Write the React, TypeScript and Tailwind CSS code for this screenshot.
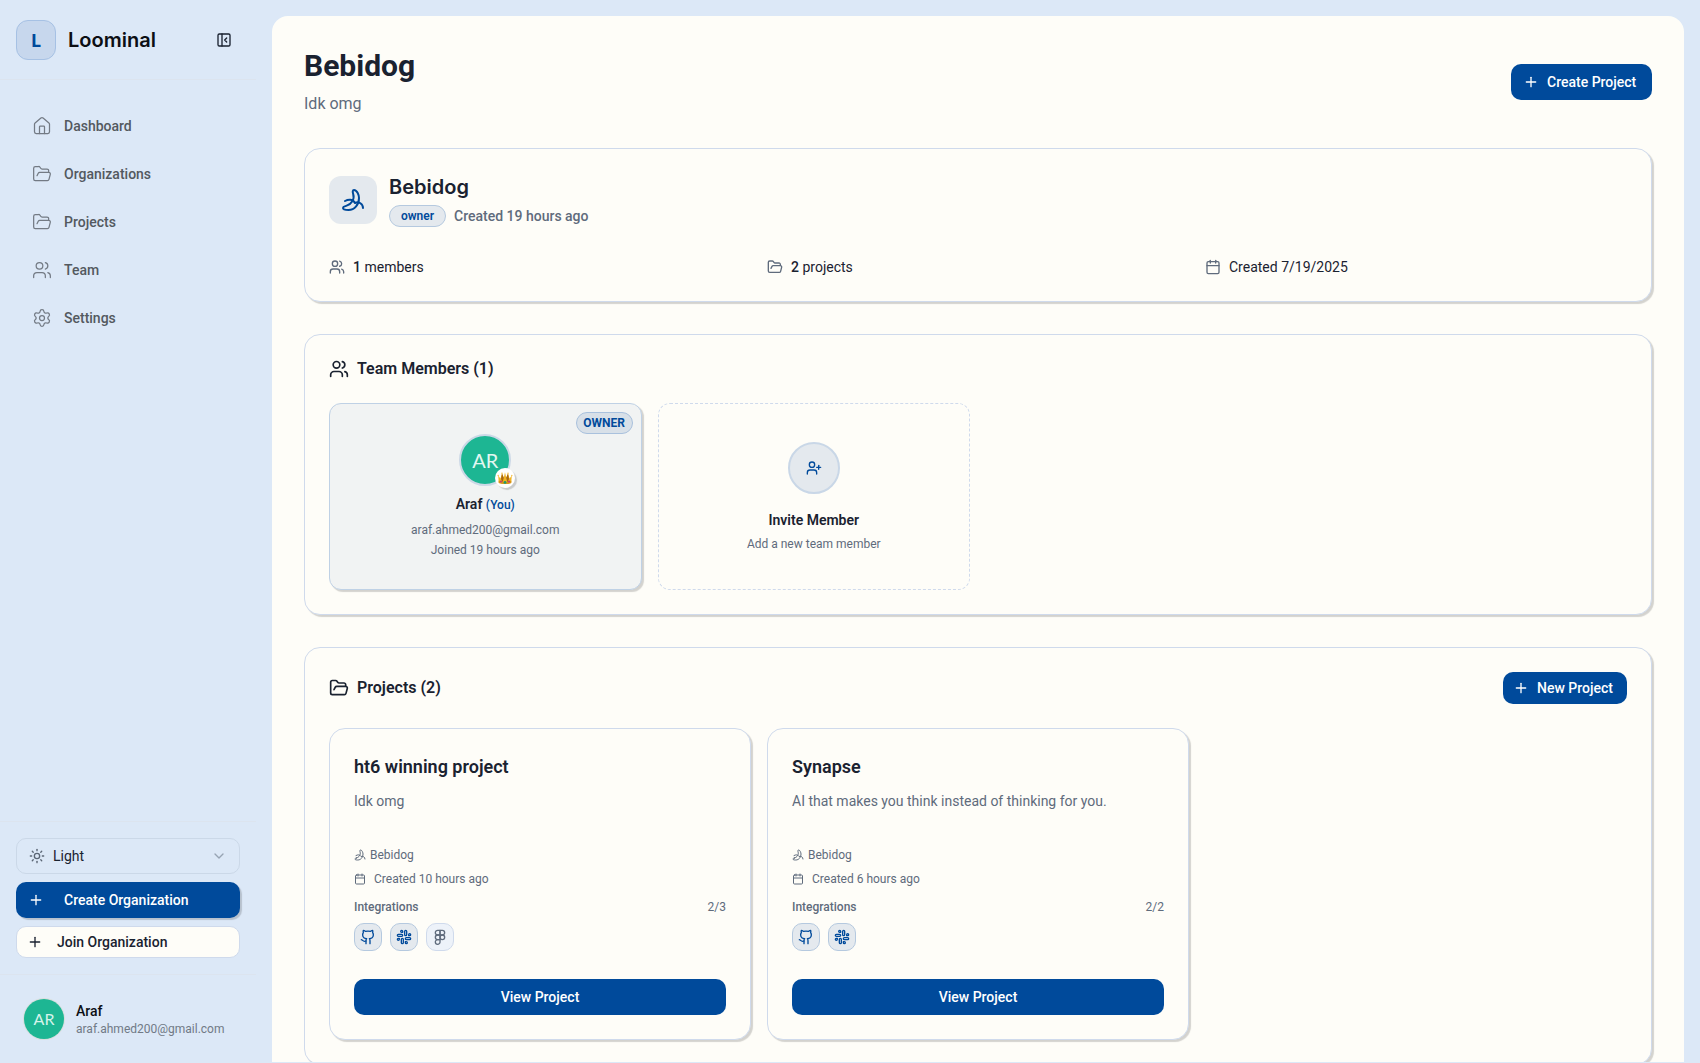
import {
  Banana,
  Calendar,
  ChevronDown,
  Figma,
  FolderOpen,
  Github,
  House,
  PanelLeftClose,
  Plus,
  Settings,
  Slack,
  Sun,
  UserPlus,
  Users,
  type LucideIcon,
} from "lucide-react";

interface NavItem {
  label: string;
  icon: LucideIcon;
}

interface Integration {
  name: string;
  icon: LucideIcon;
  connected: boolean;
}

interface Project {
  name: string;
  description: string;
  created: string;
  integrations: Integration[];
}

const navItems: NavItem[] = [
  { label: "Dashboard", icon: House },
  { label: "Organizations", icon: FolderOpen },
  { label: "Projects", icon: FolderOpen },
  { label: "Team", icon: Users },
  { label: "Settings", icon: Settings },
];

const projects: Project[] = [
  {
    name: "ht6 winning project",
    description: "Idk omg",
    created: "Created 10 hours ago",
    integrations: [
      { name: "GitHub", icon: Github, connected: true },
      { name: "Slack", icon: Slack, connected: true },
      { name: "Figma", icon: Figma, connected: false },
    ],
  },
  {
    name: "Synapse",
    description: "AI that makes you think instead of thinking for you.",
    created: "Created 6 hours ago",
    integrations: [
      { name: "GitHub", icon: Github, connected: true },
      { name: "Slack", icon: Slack, connected: true },
    ],
  },
];

const cardClass =
  "rounded-2xl border border-[#cfdaec] bg-[#fefdf8] p-6 shadow-[2px_2px_1px_rgba(0,0,0,0.17)]";

function Crown() {
  return (
    <svg viewBox="0 0 16 16" className="size-4" aria-hidden="true">
      <path
        d="M1.2 5.6 3.4 8.4 5 3.4 6.8 7.8 8 2.2 9.2 7.8 11 3.4 12.6 8.4 14.8 5.6 14.2 13Q8 15.2 1.8 13Z"
        fill="#f0b323"
      />
      <path d="M5 3.4 6.8 7.8 5.6 12.6 4 9ZM11 3.4 9.2 7.8 10.4 12.6 12 9Z" fill="#a8670f" />
      <path d="M1.6 10.8Q8 13 14.4 10.8L14.2 13Q8 15.2 1.8 13Z" fill="#d9951a" />
      <circle cx="8" cy="12.4" r="1.4" fill="#1f9d6b" />
      <circle cx="4" cy="11.6" r="1.1" fill="#c2417c" />
      <circle cx="12" cy="11.6" r="1.1" fill="#c2417c" />
      <circle cx="1.2" cy="5.6" r="0.8" fill="#f5c451" />
      <circle cx="5" cy="3.2" r="0.8" fill="#f5c451" />
      <circle cx="11" cy="3.2" r="0.8" fill="#f5c451" />
      <circle cx="14.8" cy="5.6" r="0.8" fill="#f5c451" />
    </svg>
  );
}

function Sidebar() {
  return (
    <aside className="flex w-64 shrink-0 flex-col">
      <div className="flex h-20 items-center border-b border-[#dce4ef] px-4">
        <div className="flex size-10 items-center justify-center rounded-xl border border-[#a6c1e4] bg-[#c7d7ed] font-['Noto_Sans',sans-serif] text-lg font-bold text-[#004a9b]">
          L
        </div>
        <span className="ml-3 font-[Inter,sans-serif] text-xl font-semibold text-[#0c0f14]">
          Loominal
        </span>
        <button type="button" aria-label="Collapse sidebar" className="ml-auto p-2">
          <PanelLeftClose className="size-4" />
        </button>
      </div>

      <nav className="flex flex-1 flex-col gap-1 px-4 py-6">
        {navItems.map(({ label, icon: Icon }) => (
          <a
            key={label}
            href="#"
            className="flex h-11 items-center gap-3 px-4 text-sm font-medium text-[#53595f]"
          >
            <Icon className="size-5 text-[#737a84]" strokeWidth={1.5} />
            {label}
          </a>
        ))}
      </nav>

      <div className="flex flex-col gap-2 border-t border-[#dce4ef] p-4">
        <div className="relative">
          <Sun className="pointer-events-none absolute top-2.5 left-[13px] size-4 text-[#5b6675]" />
          <select
            aria-label="Theme"
            className="h-9 w-full appearance-none rounded-[10px] border border-[#cbd8e8] bg-transparent pl-9 text-sm"
          >
            <option>Light</option>
            <option>Dark</option>
          </select>
          <ChevronDown className="pointer-events-none absolute top-2.5 right-[13px] size-4 text-[#97a3b3]" />
        </div>
        <button
          type="button"
          className="flex h-9 items-center gap-5 rounded-[10px] bg-[#004a9b] px-3 text-sm font-medium text-white shadow-[2px_2px_1px_rgba(0,0,0,0.17)]"
        >
          <Plus className="size-4" />
          Create Organization
        </button>
        <button
          type="button"
          className="flex h-8 items-center gap-3.5 rounded-[10px] border border-[#cfdaec] bg-[#fefdf8] px-2.5 text-sm font-medium"
        >
          <Plus className="size-4" />
          Join Organization
        </button>
      </div>

      <div className="flex items-center gap-3 border-t border-[#dce4ef] px-6 py-6">
        <div className="flex size-10 items-center justify-center rounded-full bg-[#1db693] font-[Lato,sans-serif] text-base text-[#d5f3ea] ring-1 ring-[#d8dedd]">
          AR
        </div>
        <div>
          <p className="text-sm leading-5 font-medium text-[#0c0f14]">Araf</p>
          <p className="text-xs leading-4 text-[#717a86]">araf.ahmed200@gmail.com</p>
        </div>
      </div>
    </aside>
  );
}

function OrganizationCard() {
  return (
    <section className={cardClass}>
      <div className="flex items-center gap-3">
        <div className="flex size-12 items-center justify-center rounded-xl bg-[#e4e9ee] text-[#004a9b]">
          <Banana className="size-6" />
        </div>
        <div>
          <h2 className="font-[Inter,sans-serif] text-xl leading-7 font-semibold">Bebidog</h2>
          <div className="mt-1 flex items-center gap-2">
            <span className="min-w-[57px] rounded-full border border-[#b5c9df] bg-[#e4e9ee] py-0.5 text-center text-xs leading-4 font-semibold text-[#004a9b]">
              owner
            </span>
            <span className="text-sm leading-5 font-medium text-[#5f6b7c]">
              Created 19 hours ago
            </span>
          </div>
        </div>
      </div>

      <div className="mt-[30px] grid grid-cols-3 gap-4 text-sm leading-5">
        <div className="flex items-center gap-2">
          <Users className="size-4 text-[#5f6b7c]" />
          <span>
            <span className="font-medium">1</span> members
          </span>
        </div>
        <div className="flex items-center gap-2">
          <FolderOpen className="size-4 text-[#5f6b7c]" />
          <span>
            <span className="font-medium">2</span> projects
          </span>
        </div>
        <div className="flex items-center gap-2">
          <Calendar className="size-4 text-[#5f6b7c]" />
          <span>Created 7/19/2025</span>
        </div>
      </div>
    </section>
  );
}

function TeamMembers() {
  return (
    <section className={cardClass}>
      <h2 className="flex items-center gap-2 text-base leading-5 font-semibold">
        <Users className="size-5" />
        Team Members (1)
      </h2>

      <div className="mt-6 grid grid-cols-4 gap-4">
        <div className="relative flex flex-col items-center rounded-xl border border-[#bfd1e5] bg-[#f1f3f3] pt-[30px] pb-[31px] shadow-[2px_2px_1px_rgba(0,0,0,0.17)]">
          <span className="absolute top-2 right-2 min-w-[57px] rounded-full border border-[#a9c1dd] bg-[#d8e0e8] py-0.5 text-center text-xs leading-4 font-bold text-[#004a9b]">
            OWNER
          </span>
          <div className="relative">
            <div className="flex size-13 items-center justify-center rounded-full border-2 border-[#ccd8e6] bg-[#1db693] font-[Lato,sans-serif] text-xl text-[#e3f7f1]">
              AR
            </div>
            <div className="absolute -right-1 -bottom-0.5 flex size-5 items-center justify-center rounded-full bg-white shadow-[2px_2px_1px_rgba(0,0,0,0.17)]">
              <Crown />
            </div>
          </div>
          <p className="mt-2 text-sm leading-5 font-semibold">
            Araf <span className="text-xs font-medium text-[#004a9b]">(You)</span>
          </p>
          <p className="mt-2 text-xs leading-4 text-[#5f6b7c]">araf.ahmed200@gmail.com</p>
          <p className="mt-1 text-xs leading-4 text-[#5f6b7c]">Joined 19 hours ago</p>
        </div>

        <button
          type="button"
          className="flex flex-col items-center justify-center rounded-xl border border-dashed border-[#cfdaec]"
        >
          <span className="flex size-13 items-center justify-center rounded-full border-2 border-[#c9d7e7] bg-[#e4e9ee] text-[#004a9b]">
            <UserPlus className="size-4" />
          </span>
          <span className="mt-4 text-sm leading-5 font-semibold">Invite Member</span>
          <span className="mt-1.5 text-xs leading-4 text-[#5f6b7c]">Add a new team member</span>
        </button>
      </div>
    </section>
  );
}

function ProjectCard({ project }: { project: Project }) {
  const connected = project.integrations.filter((item) => item.connected).length;

  return (
    <article className={cardClass}>
      <h3 className="text-lg leading-7 font-semibold">{project.name}</h3>
      <p className="mt-2 min-h-[46px] text-sm leading-6 text-[#5f6b7c]">{project.description}</p>
      <div className="mt-3 flex items-center gap-1 text-xs leading-4 text-[#5f6b7c]">
        <Banana className="size-3" />
        Bebidog
      </div>
      <div className="mt-2 flex items-center gap-2 text-xs leading-4 text-[#5f6b7c]">
        <Calendar className="size-3" />
        {project.created}
      </div>
      <div className="mt-3 flex justify-between text-xs leading-4 text-[#5f6b7c]">
        <span className="font-medium">Integrations</span>
        <span>
          {connected}/{project.integrations.length}
        </span>
      </div>
      <div className="mt-2 flex gap-2">
        {project.integrations.map(({ name, icon: Icon, connected }) => (
          <span
            key={name}
            title={name}
            className={
              connected
                ? "flex size-7 items-center justify-center rounded-[10px] border border-[#b5c9df] bg-[#e4e9ee] text-[#004a9b]"
                : "flex size-7 items-center justify-center rounded-[10px] border border-[#cfdaec] bg-[#edf2f9] text-[#5f6b7c]"
            }
          >
            <Icon className="size-4" />
          </span>
        ))}
      </div>
      <button
        type="button"
        className="mt-7 h-9 w-full rounded-[10px] bg-[#004a9b] text-sm font-medium text-white"
      >
        View Project
      </button>
    </article>
  );
}

export default function App() {
  return (
    <div className="flex h-screen overflow-hidden bg-[#dce8f7] font-[Roboto,sans-serif] text-[#1a2230]">
      <Sidebar />

      <div className="flex min-w-0 flex-1 px-4 pt-4 pb-px">
        <main className="flex flex-1 flex-col gap-8 overflow-hidden rounded-t-2xl bg-[#fefdf8] p-8">
          <header className="flex items-center justify-between">
            <div>
              <h1 className="text-3xl leading-9 font-bold">Bebidog</h1>
              <p className="mt-2 text-base leading-6 text-[#5f6b7c]">Idk omg</p>
            </div>
            <button
              type="button"
              className="flex h-9 min-w-[141px] items-center gap-2 rounded-[10px] bg-[#004a9b] px-3 text-sm font-medium text-white"
            >
              <Plus className="size-4" />
              Create Project
            </button>
          </header>

          <OrganizationCard />
          <TeamMembers />

          <section className={cardClass}>
            <div className="flex items-center justify-between">
              <h2 className="flex items-center gap-2 text-base leading-5 font-semibold">
                <FolderOpen className="size-5" />
                Projects (2)
              </h2>
              <button
                type="button"
                className="flex h-8 min-w-[124px] items-center gap-2 rounded-[10px] bg-[#004a9b] px-2.5 text-sm font-medium text-white"
              >
                <Plus className="size-4" />
                New Project
              </button>
            </div>
            <div className="mt-6 grid grid-cols-3 gap-4">
              {projects.map((project) => (
                <ProjectCard key={project.name} project={project} />
              ))}
            </div>
          </section>
        </main>
      </div>
    </div>
  );
}
